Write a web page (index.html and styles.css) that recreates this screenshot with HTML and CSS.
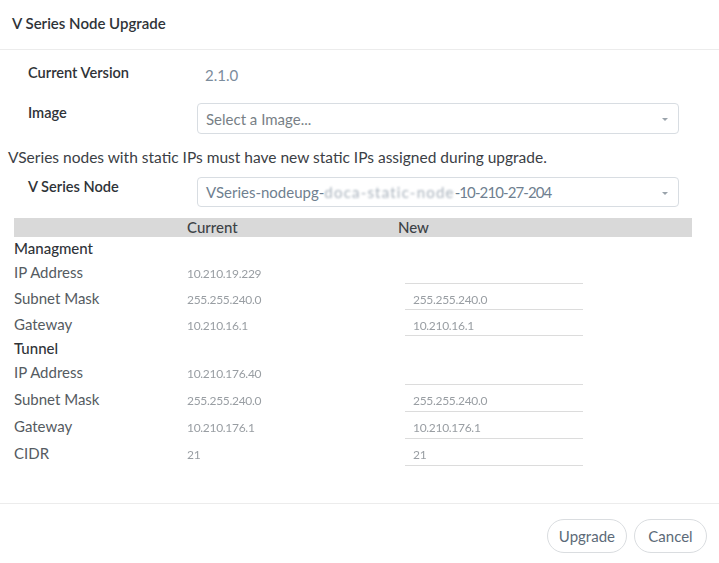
FILE: index.html
```html
<!DOCTYPE html>
<html>
<head>
<meta charset="utf-8">
<link rel="stylesheet" href="styles.css">
</head>
<body>
<div class="modal">
  <div class="modal-header">
    <h1 class="title">V Series Node Upgrade</h1>
  </div>
  <div class="modal-body">
    <div class="form-row first">
      <div class="label">Current Version</div>
      <div class="value">2.1.0</div>
    </div>
    <div class="form-row select-row">
      <div class="label">Image</div>
      <div class="select">
        <span class="placeholder">Select a Image...</span>
        <span class="caret"></span>
      </div>
    </div>
    <p class="info">VSeries nodes with static IPs must have new static IPs assigned during upgrade.</p>
    <div class="form-row select-row node-row">
      <div class="label">V Series Node</div>
      <div class="select">
        <span class="selected"><span class="sel-text">VSeries-nodeupg-</span><span class="sel-blur">doca-static-node</span><span class="sel-text tail">-10-210-27-204</span></span>
        <span class="caret"></span>
      </div>
    </div>

    <div class="table">
      <div class="thead">
        <span class="c1"></span>
        <span class="c2">Current</span>
        <span class="c3">New</span>
      </div>
      <div class="group mgmt">
        <div class="section">Managment</div>
        <div class="trow">
          <span class="c1">IP Address</span>
          <span class="c2"><span class="blur">10.210.19.229</span></span>
          <span class="c3"><span class="input"></span></span>
        </div>
        <div class="trow">
          <span class="c1">Subnet Mask</span>
          <span class="c2"><span class="blur">255.255.240.0</span></span>
          <span class="c3"><span class="input"><span class="blur">255.255.240.0</span></span></span>
        </div>
        <div class="trow">
          <span class="c1">Gateway</span>
          <span class="c2"><span class="blur">10.210.16.1</span></span>
          <span class="c3"><span class="input"><span class="blur">10.210.16.1</span></span></span>
        </div>
      </div>
      <div class="group tunnel">
        <div class="section">Tunnel</div>
        <div class="trow">
          <span class="c1">IP Address</span>
          <span class="c2"><span class="blur">10.210.176.40</span></span>
          <span class="c3"><span class="input"></span></span>
        </div>
        <div class="trow">
          <span class="c1">Subnet Mask</span>
          <span class="c2"><span class="blur">255.255.240.0</span></span>
          <span class="c3"><span class="input"><span class="blur">255.255.240.0</span></span></span>
        </div>
        <div class="trow">
          <span class="c1">Gateway</span>
          <span class="c2"><span class="blur">10.210.176.1</span></span>
          <span class="c3"><span class="input"><span class="blur">10.210.176.1</span></span></span>
        </div>
        <div class="trow">
          <span class="c1">CIDR</span>
          <span class="c2"><span class="blur">21</span></span>
          <span class="c3"><span class="input"><span class="blur">21</span></span></span>
        </div>
      </div>
    </div>
  </div>
  <div class="modal-footer">
    <button class="btn">Upgrade</button>
    <button class="btn">Cancel</button>
  </div>
</div>
</body>
</html>
```
FILE: styles.css
```css
* { box-sizing: border-box; }
html, body {
  margin: 0;
  padding: 0;
  background: #fff;
}
body {
  font-family: "Lato", "Open Sans", sans-serif;
  font-size: 15px;
  color: #333;
}
.modal {
  width: 719px;
  height: 563px;
  display: flex;
  flex-direction: column;
}
.modal-header {
  height: 50px;
  border-bottom: 1px solid #ececec;
  padding: 13px 12px 0;
}
.title {
  margin: 0;
  font-size: 15px;
  line-height: 20px;
  font-weight: 600;
  color: #2f3338;
}
.modal-body {
  padding: 13px 8px 0;
  height: 453px;
}
.form-row {
  display: flex;
  align-items: flex-start;
  padding-left: 20px;
}
.form-row.first {
  height: 40px;
}
.label {
  width: 169px;
  flex: none;
  line-height: 20px;
  font-size: 14.6px;
  font-weight: 600;
  color: #2f3338;
}
.value {
  line-height: 20px;
  padding-left: 8px;
  padding-top: 2px;
  color: #7c8c9c;
}
.select {
  width: 482px;
  height: 31px;
  border: 1px solid #d8dde2;
  border-radius: 4px;
  display: flex;
  align-items: center;
  justify-content: space-between;
  padding: 0 10px 0 8px;
  font-weight: 400;
}
.placeholder {
  color: #787f86;
}
.selected {
  display: flex;
}
.sel-text {
  color: #6f7f90;
  font-weight: 400;
}
.sel-text.tail {
  letter-spacing: -0.9px;
}
.sel-blur {
  color: #a9b3bd;
  font-weight: 400;
  letter-spacing: 1.2px;
  filter: blur(0.8px);
}
.caret {
  width: 0;
  height: 0;
  border-left: 3px solid transparent;
  border-right: 3px solid transparent;
  border-top: 3px solid #9aa3ab;
  margin-top: 2px;
}
.info {
  margin: 13px 0 10px;
  line-height: 20px;
  font-size: 15.5px;
  color: #3b4045;
}
.node-row .select {
  height: 30px;
}
.table {
  margin: 11px 19px 0 6px;
}
.thead, .trow {
  display: flex;
}
.c1 { width: 173px; flex: none; }
.c2 { width: 211px; flex: none; }
.c3 { flex: 1; }
.thead {
  background: #d9d9d9;
  height: 19px;
  line-height: 19px;
  color: #3d4246;
  font-weight: 500;
}
.section {
  height: 22px;
  line-height: 22px;
  font-weight: 500;
  color: #2f3338;
}
.trow {
  height: 26px;
  line-height: 26px;
  color: #555b61;
}
.tunnel .trow {
  height: 27px;
  line-height: 27px;
}
.blur {
  color: #999ea3;
  filter: blur(0.7px);
  letter-spacing: -0.3px;
  font-size: 12px;
}
.input {
  display: block;
  width: 178px;
  height: calc(100% - 1px);
  margin-left: 7px;
  border-bottom: 1px solid #dcdcdc;
  padding-left: 8px;
}
.modal-footer {
  border-top: 1px solid #ececec;
  flex: 1;
  display: flex;
  justify-content: flex-end;
  align-items: flex-start;
  gap: 7px;
  padding: 15px 12px 0 0;
}
.btn {
  font-family: inherit;
  font-size: 15px;
  color: #5c6a78;
  background: #fff;
  border: 1px solid #dadde0;
  border-radius: 17px;
  height: 34px;
  min-width: 73px;
  padding: 0 11px;
}
```
